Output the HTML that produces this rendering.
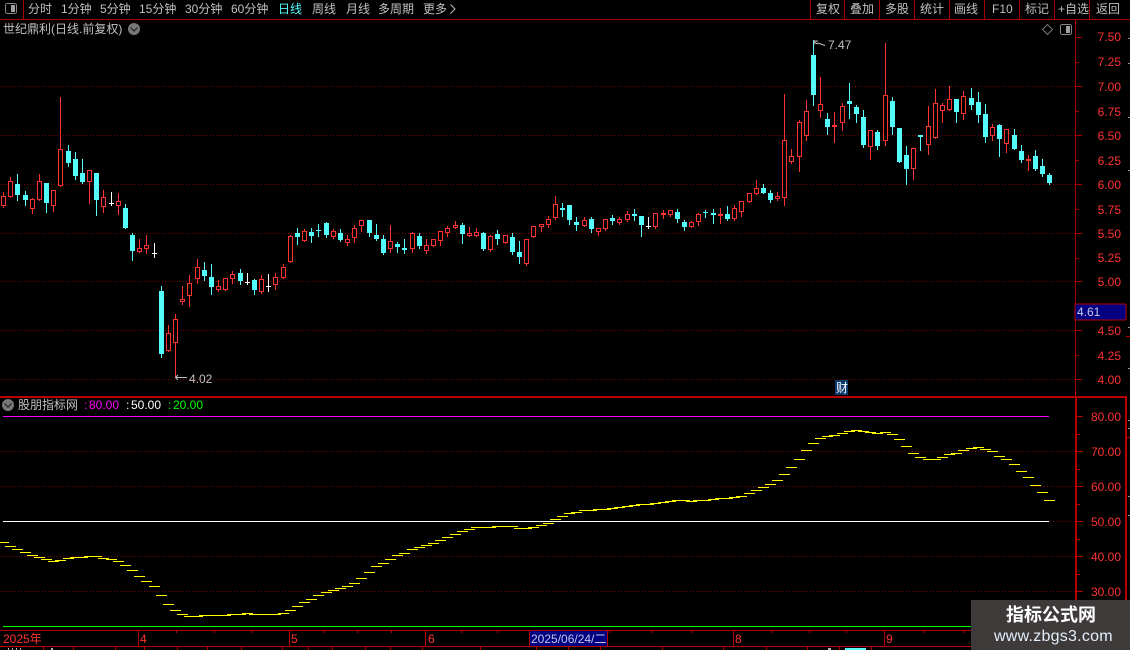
<!DOCTYPE html>
<html lang="zh"><head><meta charset="utf-8"><title>世纪鼎利</title>
<style>
html,body{margin:0;padding:0;background:#000;width:1130px;height:650px;overflow:hidden}
#r{position:relative;width:1130px;height:650px;background:#000;overflow:hidden;font-family:"Liberation Sans","WenQuanYi Zen Hei","Noto Sans CJK SC",sans-serif;font-size:12px;color:#c0c0c0}
#r svg{position:absolute;left:0;top:0}
.t{position:absolute;white-space:nowrap;line-height:16px;height:16px}
.a{position:absolute;white-space:nowrap;line-height:16px;height:16px;color:#ff3232;right:9px;text-align:right}
.n{color:#ff3232}
</style></head><body><div id="r">
<svg id="s" width="1130" height="650" shape-rendering="crispEdges">
<g id="dots" stroke="#7c0000" stroke-width="1" stroke-dasharray="1 2">
<path d="M0 86.5H1075M0 135.5H1075M0 184.5H1075M0 233.5H1075M0 281.5H1075M0 330.5H1075M0 379.5H1075M0 451.5H1075M0 486.5H1075M0 556.5H1075M0 591.5H1075M1050 521.5H1075"/>
</g>
<g id="c"></g>
<g id="y" fill="#ffff00"></g>
<g fill="#a80000">
<rect x="0" y="19" width="1130" height="1"/>
<rect x="23" y="0" width="1" height="19"/>
<rect x="810" y="0" width="1" height="19"/><rect x="844" y="0" width="1" height="19"/><rect x="879" y="0" width="1" height="19"/><rect x="914" y="0" width="1" height="19"/><rect x="949" y="0" width="1" height="19"/><rect x="984" y="0" width="1" height="19"/><rect x="1019" y="0" width="1" height="19"/><rect x="1054" y="0" width="1" height="19"/><rect x="1089" y="0" width="1" height="19"/>
<rect x="1075" y="20" width="1" height="376"/>
<rect x="1075" y="37" width="7" height="1"/><rect x="1075" y="62" width="4" height="1"/><rect x="1075" y="86" width="7" height="1"/><rect x="1075" y="111" width="4" height="1"/><rect x="1075" y="135" width="7" height="1"/><rect x="1075" y="160" width="4" height="1"/><rect x="1075" y="184" width="7" height="1"/><rect x="1075" y="209" width="4" height="1"/><rect x="1075" y="233" width="7" height="1"/><rect x="1075" y="258" width="4" height="1"/><rect x="1075" y="281" width="7" height="1"/><rect x="1075" y="330" width="7" height="1"/><rect x="1075" y="355" width="4" height="1"/><rect x="1075" y="379" width="7" height="1"/>
</g>
<g fill="#b80000">
<rect x="0" y="396" width="1126" height="2"/>
<rect x="1075" y="396" width="2" height="254"/>
<rect x="1125" y="396" width="2" height="254"/>
<rect x="0" y="630" width="1075" height="1"/>
<rect x="0" y="646" width="1075" height="1"/>
<rect x="138" y="630" width="1" height="17"/><rect x="289" y="630" width="1" height="17"/><rect x="425" y="630" width="1" height="17"/><rect x="733" y="630" width="1" height="17"/><rect x="884" y="630" width="1" height="17"/>
<rect x="176" y="631" width="1" height="2"/><rect x="214" y="631" width="1" height="2"/><rect x="252" y="631" width="1" height="2"/><rect x="323" y="631" width="1" height="2"/><rect x="357" y="631" width="1" height="2"/><rect x="391" y="631" width="1" height="2"/><rect x="461" y="631" width="1" height="2"/><rect x="497" y="631" width="1" height="2"/><rect x="609" y="631" width="1" height="2"/><rect x="651" y="631" width="1" height="2"/><rect x="692" y="631" width="1" height="2"/><rect x="771" y="631" width="1" height="2"/><rect x="809" y="631" width="1" height="2"/><rect x="846" y="631" width="1" height="2"/><rect x="923" y="631" width="1" height="2"/><rect x="963" y="631" width="1" height="2"/>
<rect x="43" y="647" width="1" height="3"/><rect x="73" y="647" width="1" height="3"/><rect x="115" y="647" width="1" height="3"/><rect x="144" y="647" width="1" height="3"/><rect x="177" y="647" width="1" height="3"/><rect x="207" y="647" width="1" height="3"/><rect x="241" y="647" width="1" height="3"/><rect x="282" y="647" width="1" height="3"/><rect x="308" y="647" width="1" height="3"/><rect x="332" y="647" width="1" height="3"/><rect x="365" y="647" width="1" height="3"/><rect x="390" y="647" width="1" height="3"/><rect x="422" y="647" width="1" height="3"/><rect x="480" y="647" width="1" height="3"/><rect x="536" y="647" width="1" height="3"/><rect x="568" y="647" width="1" height="3"/><rect x="600" y="647" width="1" height="3"/><rect x="662" y="647" width="1" height="3"/><rect x="723" y="647" width="1" height="3"/><rect x="766" y="647" width="1" height="3"/><rect x="807" y="647" width="1" height="3"/><rect x="839" y="647" width="1" height="3"/><rect x="871" y="647" width="1" height="3"/>
<rect x="1077" y="416" width="6" height="1"/><rect x="1077" y="451" width="6" height="1"/><rect x="1077" y="486" width="6" height="1"/><rect x="1077" y="521" width="6" height="1"/><rect x="1077" y="556" width="6" height="1"/><rect x="1077" y="591" width="6" height="1"/>
<rect x="1077" y="434" width="3" height="1"/><rect x="1077" y="469" width="3" height="1"/><rect x="1077" y="504" width="3" height="1"/><rect x="1077" y="539" width="3" height="1"/><rect x="1077" y="574" width="3" height="1"/>
<rect x="1126" y="336" width="4" height="1"/><rect x="1127" y="437" width="3" height="1"/>
</g>
<g fill="#9a9a9a">
<rect x="1128" y="38" width="2" height="1"/><rect x="1128" y="63" width="2" height="1"/><rect x="1128" y="117" width="2" height="1"/><rect x="1128" y="170" width="2" height="1"/><rect x="1128" y="327" width="2" height="1"/><rect x="1128" y="368" width="2" height="1"/><rect x="1128" y="420" width="2" height="1"/><rect x="1128" y="428" width="2" height="1"/><rect x="1128" y="496" width="2" height="1"/><rect x="1128" y="515" width="2" height="1"/>
</g>
<rect x="3" y="416" width="1046" height="1" fill="#ff00ff"/>
<rect x="3" y="521" width="1046" height="1" fill="#ffffff"/>
<rect x="3" y="626" width="1070" height="1" fill="#00ff00"/>
<rect x="1075" y="304" width="51" height="16" fill="#000080" stroke="#b80000"/>
<rect x="529.5" y="630.5" width="78" height="16" fill="#000080" stroke="#b80000"/>
<rect x="835" y="380" width="13" height="15" fill="#0c3a6c"/>
<rect x="176" y="377" width="11" height="1" fill="#c0c0c0"/>
<g fill="none" stroke="#c0c0c0" shape-rendering="auto">
<path d="M178 375L175.5 377.5L178 380" stroke-width="1"/>
<path d="M814 45V41H818M814 42L818 44M818 43L825 45.5" stroke-width="1"/>
</g>
<g fill="#b8b8b8">
<rect x="8" y="648" width="1" height="2"/><rect x="12" y="648" width="1" height="2"/><rect x="16" y="648" width="1" height="2"/><rect x="20" y="648" width="1" height="2"/><rect x="51" y="648" width="2" height="2"/><rect x="828" y="648" width="3" height="2"/>
</g>
<rect x="845" y="648" width="21" height="2" fill="#54fcfc"/>
<g shape-rendering="auto">
<circle cx="134" cy="29" r="6" fill="#777"/><path d="M130.5 27.5L134 31L137.5 27.5" fill="none" stroke="#222" stroke-width="1.2"/>
<circle cx="8" cy="405" r="6" fill="#777"/><path d="M4.5 403.5L8 407L11.5 403.5" fill="none" stroke="#222" stroke-width="1.2"/>
<path d="M1047.5 24.5L1052.5 29.5L1047.5 34.5L1042.5 29.5Z" fill="none" stroke="#777" stroke-width="1"/>
<path d="M450.5 4.5L455 9L450.5 13.5" fill="none" stroke="#c0c0c0" stroke-width="1"/>
</g>
<rect x="1060.5" y="24.5" width="11" height="10" rx="2" fill="#000" stroke="#8a8a8a"/>
<rect x="1066" y="26" width="4" height="7" fill="#a0a0a0"/>
<rect x="5.5" y="3.5" width="11" height="10" rx="2" fill="#000" stroke="#8a8a8a"/>
<rect x="11" y="5" width="4" height="7" fill="#a0a0a0"/>
<rect x="971" y="600" width="159" height="50" fill="#3d3a39"/>
</svg>

<span class="t" style="left:28px;top:1px">分时</span>
<span class="t" style="left:61px;top:1px">1分钟</span>
<span class="t" style="left:100px;top:1px">5分钟</span>
<span class="t" style="left:139px;top:1px">15分钟</span>
<span class="t" style="left:185px;top:1px">30分钟</span>
<span class="t" style="left:231px;top:1px">60分钟</span>
<span class="t" style="left:278px;top:1px;color:#54fcfc">日线</span>
<span class="t" style="left:312px;top:1px">周线</span>
<span class="t" style="left:346px;top:1px">月线</span>
<span class="t" style="left:378px;top:1px">多周期</span>
<span class="t" style="left:423px;top:1px">更多</span>
<span class="t" style="left:816px;top:1px">复权</span>
<span class="t" style="left:850px;top:1px">叠加</span>
<span class="t" style="left:885px;top:1px">多股</span>
<span class="t" style="left:920px;top:1px">统计</span>
<span class="t" style="left:954px;top:1px">画线</span>
<span class="t" style="left:992px;top:1px">F10</span>
<span class="t" style="left:1025px;top:1px">标记</span>
<span class="t" style="left:1058px;top:1px">+自选</span>
<span class="t" style="left:1096px;top:1px">返回</span>
<span class="t" style="left:3px;top:21px">世纪鼎利(日线.前复权)</span>

<span class="a" style="top:29px">7.50</span>
<span class="a" style="top:54px">7.25</span>
<span class="a" style="top:79px">7.00</span>
<span class="a" style="top:104px">6.75</span>
<span class="a" style="top:128px">6.50</span>
<span class="a" style="top:153px">6.25</span>
<span class="a" style="top:177px">6.00</span>
<span class="a" style="top:202px">5.75</span>
<span class="a" style="top:226px">5.50</span>
<span class="a" style="top:250px">5.25</span>
<span class="a" style="top:274px">5.00</span>
<span class="a" style="top:323px">4.50</span>
<span class="a" style="top:348px">4.25</span>
<span class="a" style="top:372px">4.00</span>
<span class="t" style="left:1077px;top:304px;color:#c8cce8">4.61</span>

<span class="t" style="left:828px;top:37px">7.47</span>
<span class="t" style="left:189px;top:371px">4.02</span>
<span class="t" style="left:836px;top:380px;color:#fff">财</span>

<span class="t" style="left:18px;top:397px">股朋指标网</span>
<span class="t" style="left:84px;top:397px;color:#ff00ff">:</span><span class="t" style="left:89px;top:397px;color:#ff00ff">80.00</span>
<span class="t" style="left:126px;top:397px;color:#fff">:</span><span class="t" style="left:131px;top:397px;color:#fff">50.00</span>
<span class="t" style="left:168px;top:397px;color:#00ff00">:</span><span class="t" style="left:173px;top:397px;color:#00ff00">20.00</span>

<span class="a" style="top:409px">80.00</span>
<span class="a" style="top:444px">70.00</span>
<span class="a" style="top:479px">60.00</span>
<span class="a" style="top:514px">50.00</span>
<span class="a" style="top:549px">40.00</span>
<span class="a" style="top:584px">30.00</span>

<span class="t n" style="left:3px;top:631px">2025年</span>
<span class="t n" style="left:140px;top:631px">4</span>
<span class="t n" style="left:291px;top:631px">5</span>
<span class="t n" style="left:428px;top:631px">6</span>
<span class="t n" style="left:735px;top:631px">8</span>
<span class="t n" style="left:886px;top:631px">9</span>
<span class="t" style="left:531px;top:631px;color:#c0c4e8">2025/06/24/二</span>

<span class="t" style="left:1006px;top:604px;font-size:18px;font-weight:bold;color:#fff;line-height:22px;height:22px">指标公式网</span>
<span class="t" style="left:994px;top:628px;font-size:16px;color:#e4eefc;line-height:18px;height:18px;letter-spacing:.25px">www.zbgs3.com</span>
</div>
<script>
var D="r3,192,196,206,207 r10,177,181,197,197 c17,174,184,195,200 c25,191,195,200,205 r32,198,199,209,213 r39,174,181,200,200 c46,183,183,203,212 r53,190,190,206,211 r60,97,149,186,186 c68,145,151,163,166 c75,152,159,176,179 c82,159,173,182,183 r89,170,170,182,203 c96,173,173,200,215 r103,190,197,207,212 w111,192,203,204,205 r118,193,201,206,214 c125,204,208,228,228 c132,233,235,251,260 r139,239,248,252,252 r146,235,245,249,253 w154,243,253,254,257 c161,286,291,354,357 r168,325,333,351,351 r175,314,319,343,377 r182,286,299,302,304 r189,275,283,296,306 r197,259,267,279,283 c204,262,270,276,280 c211,264,277,287,294 r218,280,286,290,291 r225,278,278,290,290 r232,271,274,279,283 c240,269,273,281,284 w247,273,282,283,284 c254,279,280,290,294 r261,275,279,292,293 w268,274,286,287,291 r275,273,277,285,289 r283,264,267,278,278 r290,235,236,262,262 c297,228,233,237,244 r304,229,231,241,241 c311,228,232,236,242 c318,224,230,231,236 c326,222,223,235,237 r333,229,231,237,238 c340,229,233,240,241 r347,235,239,243,245 r354,225,228,238,242 r361,220,220,226,231 c369,220,220,233,236 c376,224,235,239,240 c383,235,239,253,254 r390,225,241,249,252 c397,242,244,247,252 c404,239,248,250,253 r412,232,233,249,252 c419,233,236,246,248 r426,239,245,251,253 r433,239,239,246,246 r440,231,231,241,245 r447,226,228,233,236 r455,221,225,228,228 c462,223,225,234,243 r469,227,233,236,236 r476,228,232,236,236 c483,232,233,249,250 r490,235,236,250,251 c497,230,234,239,244 r505,235,235,243,243 c512,233,237,252,254 c519,241,252,257,263 r526,239,239,264,265 r533,226,226,237,237 r541,224,224,227,231 r548,216,219,225,227 r555,196,204,218,219 c562,203,208,210,216 c569,205,205,220,224 c576,217,222,225,230 r584,217,220,226,226 c591,217,219,229,232 r598,228,228,232,235 r605,219,219,229,230 c612,215,218,221,224 r619,217,219,223,224 r627,211,214,220,221 c634,209,214,216,220 c641,216,216,225,236 w648,217,226,227,228 r655,213,213,227,228 R663,210,213,215,218 r670,210,210,215,216 c677,209,212,219,222 c684,220,222,227,230 r691,221,222,227,227 r698,213,214,222,225 c705,210,212,213,217 c713,209,213,215,223 R720,208,214,216,223 c727,206,214,219,220 r734,205,208,219,220 r741,201,201,212,216 r749,193,193,202,202 r756,180,188,194,194 c763,184,188,193,193 c770,190,193,200,202 r777,192,196,199,200 r784,94,140,198,205 r791,149,156,162,163 r799,120,122,157,171 r806,100,111,136,140 c813,40,55,95,105 r820,77,104,111,117 c827,113,119,127,134 R834,112,125,127,142 r842,103,106,123,130 c849,83,101,104,118 c856,105,107,114,122 c863,110,117,145,147 r870,130,130,147,159 c877,130,132,146,149 r885,43,95,141,145 c892,97,101,127,134 c899,128,128,162,162 c906,146,155,169,184 r913,148,148,169,179 c920,135,135,137,150 r928,106,126,145,154 r935,89,103,138,138 r942,103,105,111,122 r949,86,99,110,110 c956,99,99,112,122 r963,91,96,114,119 c971,88,98,105,109 c978,92,102,115,122 c985,104,114,137,142 r992,124,127,136,140 c999,124,125,139,156 r1006,129,129,144,152 c1014,129,135,149,149 c1021,145,151,160,162 R1028,155,159,161,170 c1035,150,156,169,170 c1042,159,166,174,176 c1049,173,175,183,184".split(" ");
var Y=[542,546,549,552,555,557,559,561,560,558,557,557,556,556,558,559,561,565,570,576,581,586,595,604,610,614,616,616,615,615,615,615,614,614,613,614,614,614,614,613,610,606,602,599,595,592,590,588,586,583,578,572,566,563,559,555,553,549,547,545,543,540,537,534,531,529,527,527,527,526,526,526,528,528,527,525,523,519,516,513,512,510,510,509,509,508,507,506,505,504,504,503,502,501,500,500,501,500,500,499,498,498,497,496,493,490,487,484,480,474,467,459,450,443,438,436,435,433,431,430,431,432,433,432,434,439,446,453,457,459,459,457,454,453,450,448,447,449,451,456,459,464,471,477,485,492,500];
function R(x,y,w,h,f){return '<rect x="'+x+'" y="'+y+'" width="'+w+'" height="'+h+'" fill="'+f+'"/>';}
var h='',yh='';
D.forEach(function(s,i){
 var k=s[0],a=s.slice(1).split(",").map(Number),x=a[0],hi=a[1],t=a[2],b=a[3],lo=a[4];
 var col=k=='c'?'#54fcfc':(k=='w'?'#ffffff':'#ff3232');
 h+=R(x,hi,1,lo-hi+1,col);
 h+=R(x-2,t,5,Math.max(b-t,1),col);
 if(k=='r'&&b-t>2)h+=R(x-1,t+1,3,b-t-2,'#000');
 yh+=R(x-5,Y[i],11,1,'#ffff00');
});
document.getElementById('c').innerHTML=h;
document.getElementById('y').innerHTML=yh;
</script>
</body></html>
